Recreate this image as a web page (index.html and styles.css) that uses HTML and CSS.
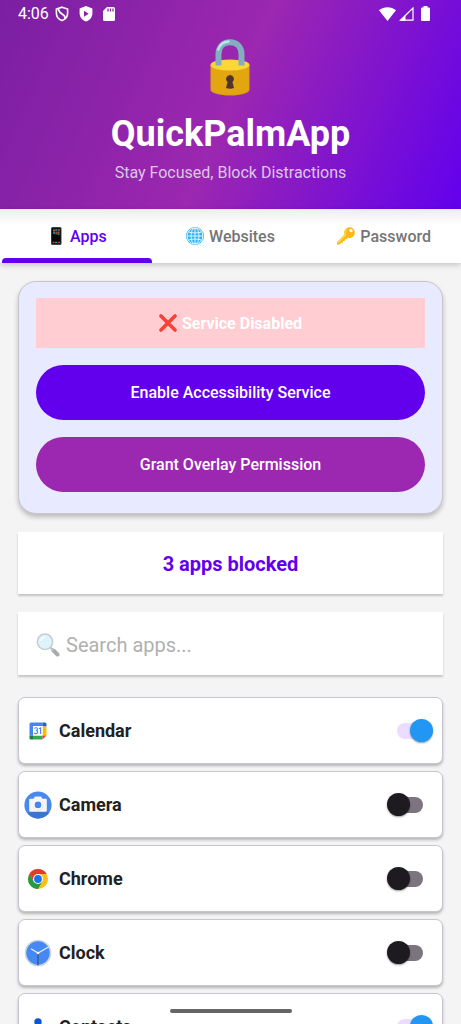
FILE: index.html
```html
<!DOCTYPE html>
<html lang="en">
<head>
<meta charset="utf-8">
<meta name="viewport" content="width=device-width, initial-scale=1">
<title>QuickPalmApp</title>
<link rel="stylesheet" href="styles.css">
</head>
<body>
<div class="app">
  <header class="hero">
    <div class="status">
      <div class="status-left">
        <span class="time">4:06</span>
        <svg width="14" height="16" viewBox="0 0 14 16" fill="none" stroke="#fff" stroke-width="1.6"><path d="M7 1.2 12.6 3v4.2c0 3.6-2.3 6.2-5.6 7.4C3.700 13.400 1.400 10.800 1.400 7.200V3z"/><path d="M3.400 2.800c.2 3 1.400 4 3.600 5.200s3.200 2.200 3.200 4.600"/></svg>
        <svg width="14" height="16" viewBox="0 0 14 16"><path fill="#fff" d="M7 0 13.400 2.500v4.800c0 4-2.700 7-6.400 8.200C3.300 14.300.600 11.300.600 7.300V2.500z"/><path fill="#8a21a8" d="M5 4.700v6l4.700-3z"/></svg>
        <svg class="sd" width="12" height="14" viewBox="0 0 12 14"><path fill="#fff" d="M4 0h6.500A1.500 1.500 0 0 1 12 1.500v11a1.500 1.500 0 0 1-1.500 1.500h-9A1.500 1.500 0 0 1 0 12.500V4z"/><path stroke="#8e24aa" stroke-width="1.300" d="M5 1.500v3M7.500 1.500v3M10 1.500v3"/></svg>
      </div>
      <div class="status-right">
        <svg width="17" height="14" viewBox="0 0 17 14"><path fill="#fff" d="M8.500 14 0 3.200C4.700-.9 12.300-.9 17 3.200z"/></svg>
        <svg width="15" height="14" viewBox="0 0 15 14"><path fill="none" stroke="#fff" stroke-width="1.200" d="M1.500 13.200H14V1z"/><path fill="#fff" d="M1 13.800 6.500 8.200v5.600z"/></svg>
        <svg class="battery" width="9" height="15" viewBox="0 0 9 15"><path fill="#fff" d="M2.500 0h4v1.500H8a1 1 0 0 1 1 1V14a1 1 0 0 1-1 1H1a1 1 0 0 1-1-1V2.500a1 1 0 0 1 1-1h1.500z"/></svg>
      </div>
    </div>
    <svg class="lock" width="41" height="57" viewBox="0 0 41 57">
      <path fill="#dba012" d="M.500 26v24.500C.500 54 9 56.500 20 56.500s19.500-2.500 19.500-6V26z"/>
      <path fill="#e2a610" d="M1.500 26v24C1.500 53 10 55.500 20 55.500S38.500 53 38.500 50V26z"/>
      <ellipse cx="20" cy="26" rx="19.500" ry="5.500" fill="#fdd835"/>
      <path fill="none" stroke="#82aec0" stroke-width="6" d="M8.500 26.500V15C8.500 7.500 13.500 3.200 20 3.200S31.500 7.500 31.500 15v11.500"/>
      <path fill="none" stroke="#b9e4ea" stroke-width="2.400" stroke-linecap="round" d="M8.300 10.500C9.800 5.500 14 2.800 18.500 2.500"/>
      <path fill="#4e342e" d="M20 36a4 4 0 0 1 2.500 7.100L24 49q-4 1.600-8 0l1.500-5.900A4 4 0 0 1 20 36z"/>
    </svg>
    <h1 class="title">QuickPalmApp</h1>
    <p class="tagline">Stay Focused, Block Distractions</p>
  </header>

  <nav class="tabs">
    <button class="tab tab-active" type="button">
      <svg width="18" height="18" viewBox="0 0 18 18"><rect x="4" y="0" width="10.500" height="18" rx="1.500" fill="#3b4145"/><rect x="4.800" y="1.200" width="8.900" height="15.400" fill="#09090c"/><path fill="#c06120" d="M6 2.500h2v2H6zm4.500 2h2v2h-2z"/><path fill="#2675a8" d="M8.300 2h2v2h-2zM6 5h2v2H6z"/><path fill="#76503a" d="M8.300 4.500h2v3h-2zM11 2h2v2h-2z"/><path fill="#2d8774" d="M10.500 6.500h2v1.500h-2z"/><path fill="#d33a32" d="M5.500 14.800h2V16h-2zm5.500 0h2V16h-2z"/><path fill="#27a9d0" d="M8.200 14.800h2V16h-2z"/></svg>
      <span>Apps</span>
    </button>
    <button class="tab" type="button">
      <svg width="18" height="18" viewBox="0 0 18 18"><circle cx="9" cy="9" r="9" fill="#29b1f3"/><g fill="none" stroke="#e5f6ff" stroke-width="1"><circle cx="9" cy="9" r="7.900"/><ellipse cx="9" cy="9" rx="4" ry="8"/><path d="M9 1v16M1 9h16M2.500 5c4 1.300 9 1.300 13 0M2.500 13c4-1.300 9-1.300 13 0"/></g></svg>
      <span>Websites</span>
    </button>
    <button class="tab" type="button">
      <svg width="18" height="18" viewBox="0 0 18 18"><path fill="#f9b91b" fill-rule="evenodd" d="M8.200 2.200c2-2.500 5.500-2.700 7.700-.7s2.600 5.500.6 7.800c-1.500 1.700-3.700 2.100-5.500 1.400l-1.400 1.500-1.500-.1-.2 1.700-1.800.1-.1 1.700-2 .3-1.200 1.400c-.5.6-2.200.7-2.600.1-.3-.5-.2-2 .1-2.400l7.200-7.600c-.7-1.700-.5-3.700.7-5.200zm4.500.2c-.6.7-.4 1.500.3 2.200s1.700.9 2.300.2.300-1.600-.4-2.200-1.600-.9-2.200-.2z"/><path fill="none" stroke="#ffdc4b" stroke-width="1.100" d="M1.300 15.500 8.600 8C7.500 5.500 8.400 3.200 10 2"/></svg>
      <span>Password</span>
    </button>
  </nav>

  <main class="content">
    <section class="service">
      <div class="alert">
        <svg width="18" height="18" viewBox="0 0 18 18"><path fill="none" stroke="#f44336" stroke-width="3.600" stroke-linecap="round" d="m2 2 14 14M16 2 2 16"/></svg>
        <span>Service Disabled</span>
      </div>
      <button class="action" type="button">Enable Accessibility Service</button>
      <button class="action action-overlay" type="button">Grant Overlay Permission</button>
    </section>

    <p class="count">3 apps blocked</p>

    <label class="search">
      <svg width="24" height="24" viewBox="0 0 24 24"><path stroke="#a9abad" stroke-width="4" stroke-linecap="round" d="m17.500 17.500 4 4"/><path stroke="#b8bdc0" stroke-width="2" d="m14.500 14.500 3 3"/><circle cx="9" cy="8.800" r="7.700" fill="#dff3fd" stroke="#c6cdd0" stroke-width="1.500"/><path fill="none" stroke="#f5fcff" stroke-width="2" stroke-linecap="round" d="M5 7c.6-1.500 1.500-2.300 3-2.700"/></svg>
      <input type="text" placeholder="Search apps..." aria-label="Search apps">
    </label>

    <ul class="list">
      <li class="row">
        <svg width="28" height="28" viewBox="0 0 28 28"><path fill="#4285f4" d="M7 5.500h11.500V9H9v9.500H5.500V7A1.500 1.500 0 0 1 7 5.500z"/><path fill="#1967d2" d="M18.500 5.500H21A1.500 1.500 0 0 1 22.500 7v2.500h-4z"/><path fill="#fbbc04" d="M18.500 9.500h4v9h-4z"/><path fill="#188038" d="M5.500 18.500H9v4H7A1.500 1.500 0 0 1 5.500 21z"/><path fill="#34a853" d="M9 18.500h9.500v4H9z"/><path fill="#ea4335" d="M18.500 18.500h4l-4 4z"/><path fill="#fff" d="M9 9h9.500v9.500H9z"/><path fill="none" stroke="#4285f4" stroke-width="1.100" d="M10.500 11.500c1-1.200 3-.8 3 .7 0 .9-.7 1.300-1.600 1.300 1 0 1.800.5 1.800 1.500 0 1.800-2.500 2.200-3.400.7M15 11.800l1.600-.9v6"/></svg>
        <label class="name" for="s1">Calendar</label>
        <input class="switch" id="s1" type="checkbox" role="switch" checked>
      </li>
      <li class="row">
        <svg width="28" height="28" viewBox="0 0 28 28"><circle cx="14" cy="14" r="13.600" fill="#4a87ee"/><path fill="#3d74cf" d="M5 20.500h18l2 1.500a13.600 13.600 0 0 1-20.500 1.500z"/><path fill="#f5f5f5" d="M6.200 7.700h3.300l1.500-2.200h6l1.500 2.200h3.300a1 1 0 0 1 1 1v11a1 1 0 0 1-1 1H6.200a1 1 0 0 1-1-1v-11a1 1 0 0 1 1-1z"/><circle cx="14.500" cy="14.400" r="5" fill="#dedede"/><circle cx="14" cy="13.900" r="4.800" fill="#fff"/><circle cx="14" cy="13.900" r="3.300" fill="#4487ef"/></svg>
        <label class="name" for="s2">Camera</label>
        <input class="switch" id="s2" type="checkbox" role="switch">
      </li>
      <li class="row">
        <svg width="28" height="28" viewBox="0 0 28 28"><circle cx="14" cy="14" r="10" fill="#fbc116"/><path fill="#e33b2e" d="M5.340 9A10 10 0 0 1 22.660 9H14L9.700 16.500z"/><path fill="#259b48" d="M5.340 9A10 10 0 0 0 14 24l4.300-7.500L9.700 16.500z"/><circle cx="14" cy="14" r="5" fill="#fff"/><circle cx="14" cy="14" r="3.900" fill="#1a73e8"/></svg>
        <label class="name" for="s3">Chrome</label>
        <input class="switch" id="s3" type="checkbox" role="switch">
      </li>
      <li class="row">
        <svg width="28" height="28" viewBox="0 0 28 28"><circle cx="14" cy="14" r="12.500" fill="#4688f4" stroke="#c9d4dc" stroke-width="1.600"/><path stroke="#344d78" stroke-width="1.100" d="M14 14v12.500"/><path fill="none" stroke="#e9f0fb" stroke-width="1.200" d="m7 9.800 7 4.200 10.500-6"/><circle cx="14" cy="14" r="1.200" fill="#fff"/></svg>
        <label class="name" for="s4">Clock</label>
        <input class="switch" id="s4" type="checkbox" role="switch">
      </li>
      <li class="row">
        <svg width="28" height="28" viewBox="0 0 28 28"><circle cx="14" cy="9" r="3.700" fill="#0b57d0"/><path fill="#0b57d0" d="M6 23c0-9 16-9 16 0z"/></svg>
        <label class="name" for="s5">Contacts</label>
        <input class="switch" id="s5" type="checkbox" role="switch" checked>
      </li>
    </ul>
  </main>
  <div class="home-bar"></div>
</div>
</body>
</html>
```
FILE: styles.css
```css
* { box-sizing: border-box; }

body {
  margin: 0;
  background: #f4f4f4;
  font-family: Roboto, "Liberation Sans", sans-serif;
  font-size: 16px;
}

button, input { font: inherit; }
svg { display: block; flex: none; }

.app {
  display: flex;
  flex-direction: column;
  height: 100vh;
  overflow: hidden;
}

.hero {
  display: flex;
  flex-direction: column;
  align-items: center;
  flex: none;
  padding-bottom: 26px;
  background: linear-gradient(114deg, #7b1fa2, #9c27b0 50%, #6200ee);
  color: #fff;
}

.status {
  display: flex;
  justify-content: space-between;
  align-self: stretch;
  height: 27px;
  padding: 0 31px 0 18px;
}

.status-left, .status-right { display: flex; align-items: center; }
.time { margin-right: 6px; }
.status-left svg + svg { margin-left: 10px; }
.status-right { gap: 2px; }
.status-right .battery { margin-left: 5px; }

.lock { margin-top: 12px; }

.title {
  margin: 17px 0 0;
  font-size: 36px;
  font-weight: 700;
  line-height: 42px;
}

.tagline {
  margin: 8px 0 0;
  color: #dcc6e6;
  line-height: 20px;
}

.status-right svg:first-child { margin-right: 1px; }

.tabs {
  display: grid;
  grid-template-columns: repeat(3, 1fr);
  flex: none;
  z-index: 1;
  background: linear-gradient(#ededed, #fff 16px);
  box-shadow: 0 2px 6px rgba(0, 0, 0, .2);
}

.tab {
  position: relative;
  display: flex;
  align-items: center;
  justify-content: center;
  gap: 5px;
  height: 54px;
  padding: 0;
  border: 0;
  background: none;
  color: #757575;
  font-weight: 500;
}

.tab-active { color: #6200ee; }

.tab-active::after {
  content: "";
  position: absolute;
  left: 2px;
  right: 2px;
  bottom: 0;
  height: 5px;
  border-radius: 4px 4px 0 0;
  background: #6200ee;
}

.content {
  display: flex;
  flex-direction: column;
  flex: 1;
  gap: 18px;
  min-height: 0;
  padding: 18px 18px 0;
  overflow-y: auto;
  scrollbar-width: none;
}

.service {
  display: flex;
  flex-direction: column;
  flex: none;
  gap: 17px;
  padding: 16px 17px 21px;
  border: 1px solid #cac4d0;
  border-radius: 18px;
  background: #e8eaff;
  box-shadow: 0 3px 5px rgba(0, 0, 0, .24);
}

.alert {
  display: flex;
  align-items: center;
  justify-content: center;
  gap: 5px;
  height: 50px;
  background: #ffcdd2;
  color: #fff;
  font-weight: 700;
}

.action {
  height: 55px;
  border: 0;
  border-radius: 28px;
  background: #6200ee;
  color: #fff;
  font-weight: 500;
}

.action-overlay { background: #9c27b0; }

.count, .search {
  flex: none;
  margin: 0;
  background: #fff;
  box-shadow: 0 2px 2px rgba(0, 0, 0, .2);
}

.count {
  height: 62px;
  color: #6200ee;
  font-size: 20px;
  font-weight: 700;
  line-height: 64px;
  text-align: center;
}

.search {
  display: flex;
  align-items: center;
  gap: 6px;
  height: 63px;
  padding: 2px 18px 0;
}

.search input {
  flex: 1;
  min-width: 0;
  padding: 0;
  border: 0;
  outline: 0;
  background: none;
  color: #212121;
  font-size: 20px;
}

.search input::placeholder { color: #b0b0b0; opacity: 1; }

.list {
  display: flex;
  flex-direction: column;
  gap: 7px;
  margin: 4px 0 0;
  padding: 0;
  list-style: none;
}

.row {
  display: flex;
  align-items: center;
  gap: 7px;
  height: 67px;
  padding: 0 9px 0 5px;
  border: 1px solid #cac4d0;
  border-radius: 7px;
  background: #fff;
  box-shadow: 0 2px 3px rgba(0, 0, 0, .26);
}

.name {
  flex: 1;
  color: #212121;
  font-size: 18px;
  font-weight: 700;
}

.switch {
  appearance: none;
  position: relative;
  width: 46px;
  height: 24px;
  margin: 0;
}

.switch::before, .switch::after {
  content: "";
  position: absolute;
}

.switch::before {
  inset: 4px 10px;
  border-radius: 8px;
  background: #7c747f;
}

.switch::after {
  top: 0;
  left: 0;
  width: 23px;
  height: 23px;
  border-radius: 50%;
  background: #1d1b20;
  box-shadow: 0 1px 2px rgba(0, 0, 0, .4);
}

.switch:checked::before { background: #eaddff; }
.switch:checked::after { left: 23px; background: #2196f3; }

.home-bar {
  position: fixed;
  z-index: 2;
  bottom: 11px;
  left: 50%;
  width: 122px;
  height: 4px;
  margin-left: -61px;
  border-radius: 2px;
  background: #656565;
}
```
